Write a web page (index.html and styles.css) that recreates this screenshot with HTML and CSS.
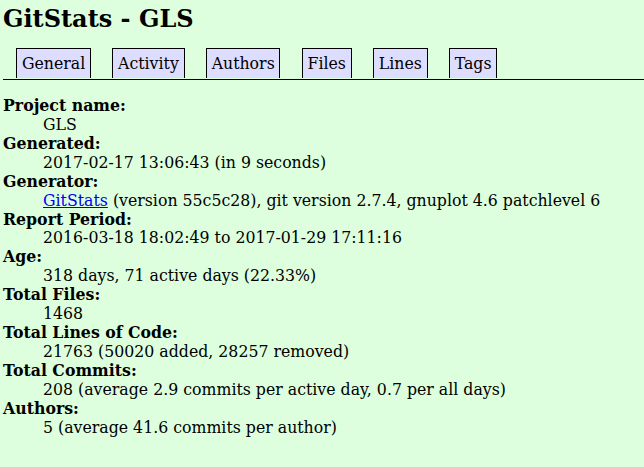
FILE: index.html
```html
<!DOCTYPE html>
<html>
<head>
<meta charset="utf-8">
<title>GitStats - GLS</title>
<link rel="stylesheet" href="styles.css">
</head>
<body>
<h1 class="title">GitStats - GLS</h1>
<div class="nav">
<ul class="nav-list">
<li class="nav-item"><a class="nav-link" href="#">General</a></li>
<li class="nav-item"><a class="nav-link" href="#">Activity</a></li>
<li class="nav-item"><a class="nav-link" href="#">Authors</a></li>
<li class="nav-item"><a class="nav-link" href="#">Files</a></li>
<li class="nav-item"><a class="nav-link" href="#">Lines</a></li>
<li class="nav-item"><a class="nav-link" href="#">Tags</a></li>
</ul>
</div>
<dl class="info">
<dt class="label">Project name</dt><dd class="value">GLS</dd>
<dt class="label">Generated</dt><dd class="value">2017-02-17 13:06:43 (in 9 seconds)</dd>
<dt class="label">Generator</dt><dd class="value"><a class="link" href="#">GitStats</a> (version 55c5c28), git version 2.7.4, gnuplot 4.6 patchlevel 6</dd>
<dt class="label">Report Period</dt><dd class="value">2016-03-18 18:02:49 to 2017-01-29 17:11:16</dd>
<dt class="label">Age</dt><dd class="value">318 days, 71 active days (22.33%)</dd>
<dt class="label">Total Files</dt><dd class="value">1468</dd>
<dt class="label">Total Lines of Code</dt><dd class="value">21763 (50020 added, 28257 removed)</dd>
<dt class="label">Total Commits</dt><dd class="value">208 (average 2.9 commits per active day, 0.7 per all days)</dd>
<dt class="label">Authors</dt><dd class="value">5 (average 41.6 commits per author)</dd>
</dl>
</body>
</html>
```

FILE: styles.css
```css
html, body {
  background-color: #dfd;
}
body {
  margin: 0;
  padding: 0 0 0 3px;
  color: black;
  font-family: "DejaVu Serif", serif;
  font-size: 15.75px;
}
.title {
  font-size: 24px;
  font-weight: bold;
  margin: 4px 0 0 0;
}
.nav {
  padding-top: 21px;
  height: 25px;
  border-bottom: 1px solid black;
}
.nav-list {
  margin: 0;
  padding: 0 0 0 5px;
}
.nav-item {
  list-style-type: none;
  display: inline;
}
.nav-link {
  padding: 0.3em;
  border-left: 1px solid black;
  border-right: 1px solid black;
  border-top: 1px solid black;
  margin: 0 8.2px;
  background-color: #ddf;
  text-decoration: none;
  color: black;
}
.info {
  margin: 17px 0 0 0;
  line-height: 18.92px;
}
.label {
  font-weight: bold;
}
.label::after {
  content: ':';
}
.value {
  margin-left: 40px;
}
.link {
  color: #00e;
  text-decoration: underline;
}
```
